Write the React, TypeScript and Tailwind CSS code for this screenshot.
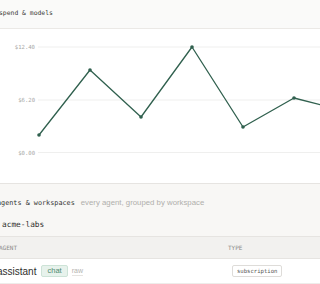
import React from "react";

const pts: [number, number][] = [
  [39, 106],
  [90, 41],
  [141, 88],
  [192, 18],
  [243, 98],
  [294, 69],
  [345, 82],
];

const grid = [
  { y: 18, label: "$12.40" },
  { y: 71, label: "$6.20" },
  { y: 123.5, label: "$0.00" },
];

function Chart() {
  return (
    <svg width={320} height={154} viewBox="0 0 320 154" className="block">
      {grid.map((g) => (
        <g key={g.label}>
          <line x1={38} x2={330} y1={g.y} y2={g.y} stroke="#efefee" strokeWidth={1} />
          <text
            x={35}
            y={g.y + 2}
            textAnchor="end"
            fontSize={5.6}
            fill="#a8a8a6"
            className="font-['DejaVu_Sans_Mono',monospace]"
          >
            {g.label}
          </text>
        </g>
      ))}
      <polyline
        points={pts.map((p) => p.join(",")).join(" ")}
        fill="none"
        stroke="#30604e"
        strokeWidth={1.3}
        strokeLinejoin="round"
      />
      {pts.map(([x, y]) => (
        <circle key={x} cx={x} cy={y} r={1.8} fill="#30604e" />
      ))}
    </svg>
  );
}

export default function App() {
  return (
    <div className="w-[320px] h-[284px] overflow-hidden bg-white">
      <div className="h-[29px] bg-[#fafaf9] border-b border-[#ebe9e6] flex items-center">
        <span className="text-[6.4px] text-[#3a3a38] whitespace-nowrap -ml-[1px] font-['DejaVu_Sans_Mono',monospace]">
          spend &amp; models
        </span>
      </div>
      <div className="h-[154px]">
        <Chart />
      </div>
      <div className="h-[53px] border-t border-[#e6e4e1] bg-[#f8f7f5] flex flex-col">
        <div className="flex items-baseline whitespace-nowrap mt-[14px] h-[10px] leading-[10px]">
          <span className="text-[6.8px] text-[#333331] -ml-[3px] font-['DejaVu_Sans_Mono',monospace]">
            agents &amp; workspaces
          </span>
          <span className="text-[7.8px] text-[#b0afac] ml-[6px] font-['Liberation_Sans',Arial,sans-serif]">
            every agent, grouped by workspace
          </span>
        </div>
        <div className="mt-[8px] whitespace-nowrap ml-[2px] h-[10px] leading-[10px]">
          <span className="text-[7.8px] text-[#2f2f2d] font-['DejaVu_Sans_Mono',monospace]">
            acme-labs
          </span>
        </div>
      </div>
      <div className="h-[23px] border-y border-[#e6e4e1] bg-[#f2f1ef] flex items-center whitespace-nowrap font-['DejaVu_Sans_Mono',monospace] text-[6px] text-[#8d8c89]">
        <span className="w-[228px] -ml-[1px]">AGENT</span>
        <span className="ml-[1px]">TYPE</span>
      </div>
      <div className="h-[25px] border-b border-[#eeecea] flex items-center whitespace-nowrap">
        <div className="w-[232px] flex items-center -ml-[3px] font-['Liberation_Sans',Arial,sans-serif]">
          <span className="text-[10px] text-[#2e2e2c]">assistant</span>
          <span className="ml-[5px] h-[12px] px-[5px] flex items-center rounded-[2px] bg-[#e7f2ec] border border-[#cde3d7] text-[7.5px] text-[#4e8a70]">
            chat
          </span>
          <span className="ml-[4px] text-[7px] text-[#b4b3b0] border-b border-[#e6e4e1] leading-[8px]">
            raw
          </span>
        </div>
        <span className="ml-[3px] h-[12px] px-[4px] flex items-center rounded-[2px] bg-white border border-[#dedcd9] text-[5.6px] text-[#555452] font-['DejaVu_Sans_Mono',monospace]">
          subscription
        </span>
      </div>
    </div>
  );
}
